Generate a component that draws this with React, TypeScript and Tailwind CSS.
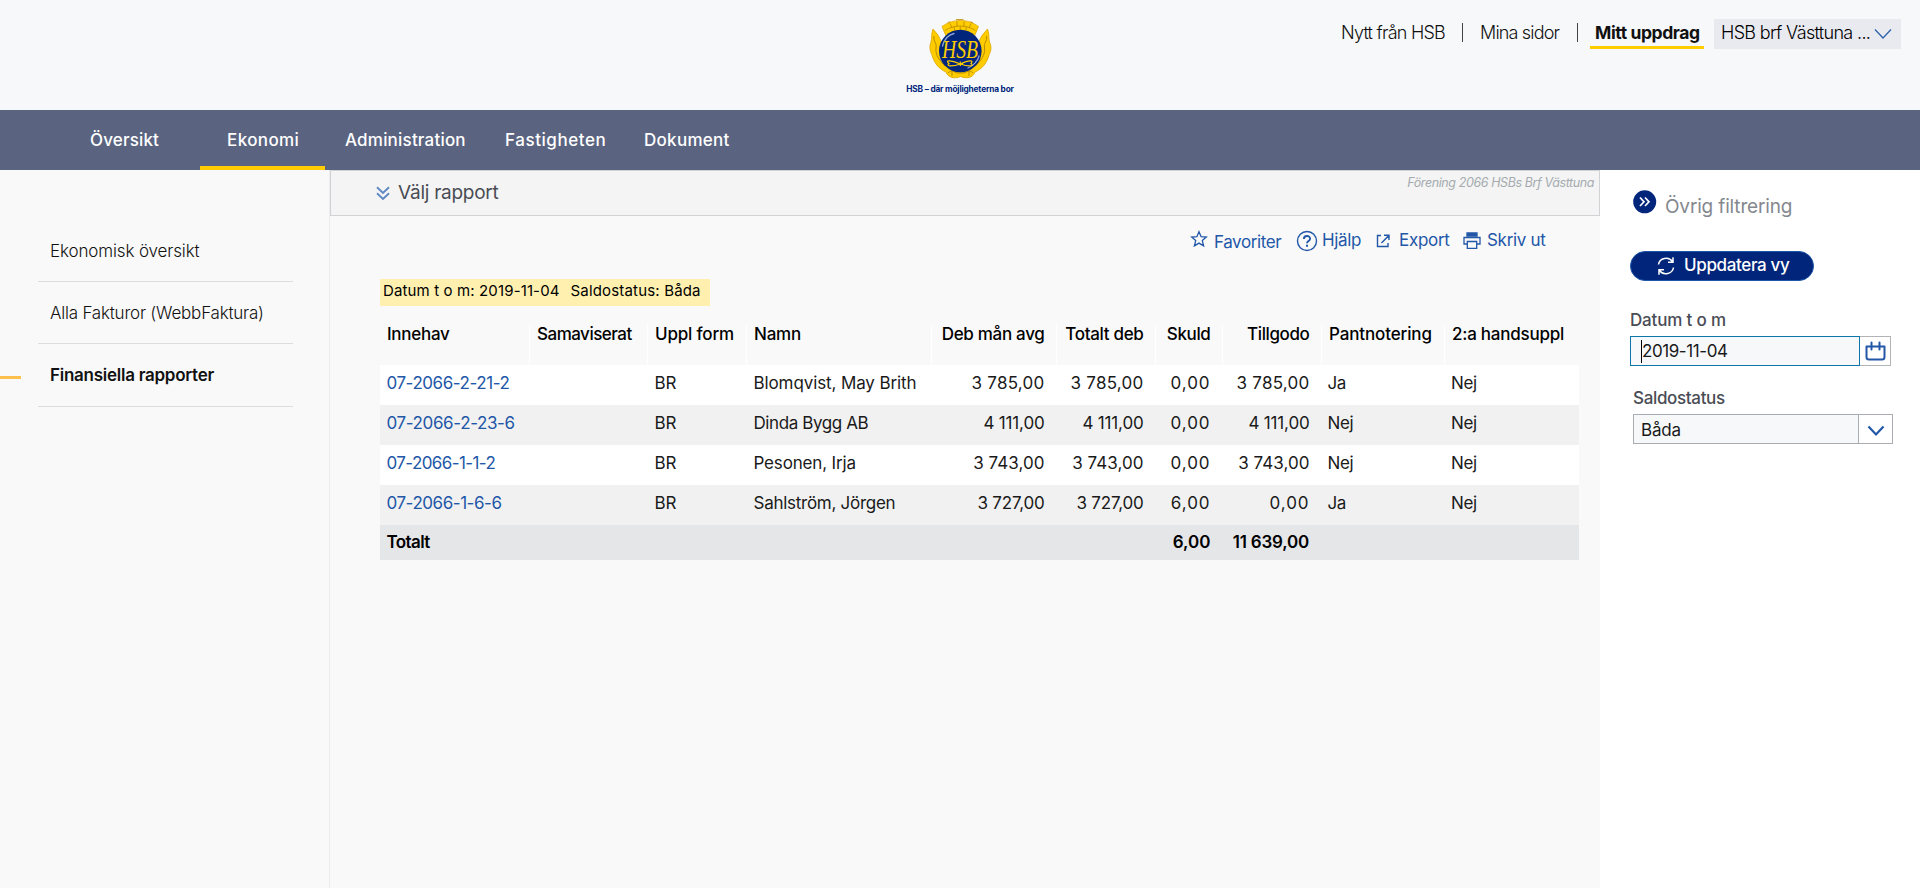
import type { ReactNode } from 'react';

function Logo() {
  return (
    <div className="flex w-[120px] flex-col items-center pt-[18px]">
      <svg width="64" height="62" viewBox="0 0 64 62" fill="none">
        <path d="M14 8.500C25 0.500 40 0.500 50.500 8.500L46.500 18C38 12.500 26.500 12.500 18 18Z" fill="#fc0" stroke="#e0aa00" strokeWidth=".8" />
        <path d="M19.500 5L22 3.500M28 1.500h7.500M42.500 3.500L45 5M17 12.500C26 6.500 38.500 6.500 47.500 12.500M22 5.500l2 4.500M29 3.500v5M36 3.500v5M43 5.500l-2 4.500M26 9l1 5M32.300 8.500v5M38.500 9l-1 5" stroke="#b98b00" strokeWidth=".8" />
        <path d="M5 11C3 17 4 20 3 24C1 29 2 33 4 37C6 45 11 51 18 54C20 60 27 61 32.500 58.500C38 61 45 60 47 54C54 51 59 45 61 37C63 33 64 29 61.500 24C60.500 20 61.500 17 59.500 11L54 17.500L50 25L52 42L42 52H23L12 42L14 25L10 17Z" fill="#fc0" stroke="#dca700" strokeWidth=".8" />
        <path d="M6 18C5 24 9 24 8 30C7 37 12 43 17 48M58.500 18C59.500 24 55.500 24 56.500 30C57.500 37 52.500 43 47.500 48M20 55C24 51 26 54 29 55H36C39 54 41 51 45 55M24 53v5M41 53v5" stroke="#b98b00" strokeWidth="1" />
        <circle cx="32.300" cy="33" r="21.300" fill="#00257a" />
        <path d="M14.500 28C16 22 20 17 26 15.500M40 50C45 48 50 43 51 38" stroke="#8fa3d4" strokeWidth="1.300" strokeLinecap="round" />
        <text x="14" y="39.500" fontSize="25" fontStyle="italic" textLength="36" lengthAdjust="spacingAndGlyphs" fill="#fc0" fontFamily="Liberation Serif, serif">HSB</text>
        <path d="M21 45.500C17 42.500 21 41.500 32.300 46C43 49.500 46 47.500 43 45.500C46 42.500 42 41.500 32.300 46C22 49.500 18 47.500 21 45.500ZM32.300 43.500v4.500M30 45.700h5" stroke="#fc0" strokeWidth="1.200" />
      </svg>
      <span className="mt-[2px] whitespace-nowrap text-[8.3px] leading-[14px] font-bold tracking-[-0.18px] text-[#00257a]">HSB – där möjligheterna bor</span>
    </div>
  );
}

function Header() {
  return (
    <header className="grid h-[110px] grid-cols-[1fr_auto_1fr] bg-[#f7f8fa]">
      <div />
      <Logo />
      <div className="flex justify-end pt-[19px] pr-[19px] text-[18px] leading-[28px] font-light whitespace-nowrap text-[#111]">
        <span className="w-[121px] tracking-[-0.77px]">Nytt från HSB</span>
        <span className="mt-[4px] h-[19px] w-px bg-[#444]" />
        <span className="w-[114px] pl-[17px] tracking-[-0.83px]">Mina sidor</span>
        <span className="mt-[4px] h-[19px] w-px bg-[#444]" />
        <span className="ml-[12px] h-[30px] w-[114px] border-b-[3px] border-[#fc0] pl-[5px] text-[17.5px] leading-[27px] font-bold tracking-[-0.4px]">Mitt uppdrag</span>
        <div className="ml-[10px] flex h-[30px] w-[187px] items-start bg-[#e9eaf0] pl-[7px] text-black">
          <span className="w-[153px] tracking-[-0.67px]">HSB brf Västtuna ...</span>
          <svg className="mt-[9px]" width="18" height="12" viewBox="0 0 18 12" fill="none" stroke="#2f62ad" strokeWidth="1.3">
            <path d="M1 1.500L9 10L17 1.500" />
          </svg>
        </div>
      </div>
    </header>
  );
}

function MainNav() {
  return (
    <nav className="flex h-[60px] bg-[#5a6480] pl-[90px] text-[17px] leading-[60px] font-medium whitespace-nowrap text-white">
      <span className="w-[110px] tracking-[0.15px]">Översikt</span>
      <span className="w-[125px] border-b-4 border-[#fc0] pl-[27px] tracking-[0.38px]">Ekonomi</span>
      <span className="w-[180px] pl-[20px] tracking-[0.2px]">Administration</span>
      <span className="w-[139px] tracking-[0.56px]">Fastigheten</span>
      <span className="tracking-[0.29px]">Dokument</span>
    </nav>
  );
}

function Sidebar() {
  return (
    <aside className="flex w-[330px] shrink-0 flex-col border-r border-[#ececee] pt-[49px] text-[17px] font-light whitespace-nowrap text-[#111]">
      <div className="mr-[36px] ml-[38px] flex h-[63px] items-center border-b border-[#dcdddd] pt-[3px] pl-[12px] tracking-[-0.13px]">Ekonomisk översikt</div>
      <div className="mr-[36px] ml-[38px] flex h-[62px] items-center border-b border-[#dcdddd] pt-[2px] pl-[12px] tracking-[-0.21px]">Alla Fakturor (WebbFaktura)</div>
      <div className="flex h-[63px] items-center">
        <span className="mt-[4px] mr-[17px] h-[3px] w-[21px] bg-[#ffc04d]" />
        <span className="flex h-full w-[255px] items-center border-b border-[#dcdddd] pt-[2px] pl-[12px] font-semibold tracking-[-0.26px]">Finansiella rapporter</span>
      </div>
    </aside>
  );
}

function Toolbar() {
  return (
    <div className="flex h-[50px] items-start pt-[10px] pl-[860px] text-[17px] leading-[28px] whitespace-nowrap text-[#2257a8]">
      <svg className="mt-[4px]" width="18" height="18" viewBox="0 0 18 18" fill="none" stroke="currentColor" strokeWidth="1.300" strokeLinejoin="miter">
        <path d="M9 1.700L11.100 6.700L16.300 7.100L12.300 10.600L13.600 15.900L9 13.100L4.400 15.900L5.700 10.600L1.700 7.100L6.900 6.700Z" />
      </svg>
      <span className="mt-[2px] ml-[6px] w-[82px] tracking-[-0.4px]">Favoriter</span>
      <svg className="mt-[4px]" width="22" height="22" viewBox="0 0 22 22" fill="none" stroke="currentColor" strokeWidth="1.400">
        <circle cx="11" cy="11" r="9.500" />
        <path d="M7.900 9C7.900 5 14.100 5 14.100 8.700C14.100 11 11 11 11 13.300" strokeWidth="1.900" />
        <path d="M11 14.700v2" strokeWidth="2" />
      </svg>
      <span className="ml-[4px] w-[54px] tracking-[-0.35px]">Hjälp</span>
      <svg className="mt-[8px]" width="15" height="14" viewBox="0 0 15 14" fill="none" stroke="currentColor" strokeWidth="1.400">
        <path d="M5 1.500H1.500V12.500H12V9M8 1.300H13V6M12.800 1.500L5.500 9" />
      </svg>
      <span className="ml-[8px] w-[64px] tracking-[-0.3px]">Export</span>
      <svg className="mt-[5px]" width="18" height="19" viewBox="0 0 18 19" fill="none" stroke="currentColor" strokeWidth="1.300">
        <path d="M4 2H14V5H4Z" fill="currentColor" />
        <path d="M4 13H1V6.500H17V13H14M4.300 10.500H13.700V17.300H4.300Z" />
      </svg>
      <span className="ml-[6px] tracking-[-0.3px]">Skriv ut</span>
    </div>
  );
}

const columns = [
  { label: 'Innehav', width: 'w-[150px]', track: 'tracking-[-0.28px]', right: false },
  { label: 'Samaviserat', width: 'w-[118px]', track: 'tracking-[-0.5px]', right: false },
  { label: 'Uppl form', width: 'w-[99px]', track: 'tracking-[-0.18px]', right: false },
  { label: 'Namn', width: 'w-[185px]', track: 'tracking-[-0.2px]', right: false },
  { label: 'Deb mån avg', width: 'w-[125px]', track: 'tracking-[-0.31px]', right: true },
  { label: 'Totalt deb', width: 'w-[99px]', track: 'tracking-[-0.32px]', right: true },
  { label: 'Skuld', width: 'w-[67px]', track: 'tracking-[-0.37px]', right: true },
  { label: 'Tillgodo', width: 'w-[99px]', track: 'tracking-[-0.39px]', right: true },
  { label: 'Pantnotering', width: 'w-[123px]', track: 'tracking-[-0.13px]', right: false },
  { label: '2:a handsuppl', width: 'w-[134px]', track: 'tracking-[-0.24px]', right: false },
];

const rows = [
  { id: '07-2066-2-21-2', idTrack: 'tracking-[-0.45px]', name: 'Blomqvist, May Brith', nameTrack: 'tracking-[-0.11px]', deb: '3 785,00', debTrack: 'tracking-[0.25px]', skuld: '0,00', till: '3 785,00', tillTrack: 'tracking-[0.25px]', pant: 'Ja' },
  { id: '07-2066-2-23-6', idTrack: 'tracking-[-0.38px]', name: 'Dinda Bygg AB', nameTrack: 'tracking-[-0.41px]', deb: '4 111,00', debTrack: 'tracking-[-0.17px]', skuld: '0,00', till: '4 111,00', tillTrack: 'tracking-[-0.17px]', pant: 'Nej' },
  { id: '07-2066-1-1-2', idTrack: 'tracking-[-0.6px]', name: 'Pesonen, Irja', nameTrack: 'tracking-[-0.16px]', deb: '3 743,00', debTrack: 'tracking-[0.04px]', skuld: '0,00', till: '3 743,00', tillTrack: 'tracking-[0.04px]', pant: 'Nej' },
  { id: '07-2066-1-6-6', idTrack: 'tracking-[-0.45px]', name: 'Sahlström, Jörgen', nameTrack: 'tracking-[-0.27px]', deb: '3 727,00', debTrack: 'tracking-[-0.21px]', skuld: '6,00', till: '0,00', tillTrack: 'tracking-[0.95px]', pant: 'Ja' },
];

function Num({ children, track }: { children: ReactNode; track: string }) {
  return <td className={'pr-[12.5px] pb-[4px] text-right ' + track}>{children}</td>;
}

function ReportTable() {
  return (
    <table className="mt-[19px] ml-[50px] w-[1199px] table-fixed border-collapse text-[17px] leading-[20px] whitespace-nowrap text-[#1a1a1a]">
      <thead>
        <tr className="h-[40px] text-black">
          {columns.map((c, i) => (
            <th
              key={c.label}
              className={`${c.width} ${c.track} ${c.right ? 'pr-[12.5px] text-right' : 'pl-[7px] text-left'} ${i < 9 ? 'shadow-[inset_-1px_0_0_#fff]' : ''} pb-[22px] leading-[18px] font-medium`}
            >
              {c.label}
            </th>
          ))}
        </tr>
      </thead>
      <tbody>
        {rows.map((r) => (
          <tr key={r.id} className="h-[40px] odd:bg-white even:bg-[#f1f1f1]">
            <td className={'pb-[4px] pl-[6.5px] text-[#2257a8] ' + r.idTrack}>{r.id}</td>
            <td />
            <td className="pb-[4px] pl-[6.5px] tracking-[-0.12px]">BR</td>
            <td className={'pb-[4px] pl-[6.5px] ' + r.nameTrack}>{r.name}</td>
            <Num track={r.debTrack}>{r.deb}</Num>
            <Num track={r.debTrack}>{r.deb}</Num>
            <Num track="tracking-[0.95px]">{r.skuld}</Num>
            <Num track={r.tillTrack}>{r.till}</Num>
            <td className="pb-[4px] pl-[5.5px] tracking-[-0.4px]">{r.pant}</td>
            <td className="pb-[4px] pl-[6px] tracking-[-0.36px]">Nej</td>
          </tr>
        ))}
        <tr className="h-[35px] bg-[#e5e6e8] font-semibold text-black">
          <td className="pb-[2px] pl-[6.5px] tracking-[-0.6px]">Totalt</td>
          <td colSpan={5} />
          <td className="pr-[12.5px] pb-[2px] text-right">6,00</td>
          <td className="pr-[13px] pb-[2px] text-right tracking-[-0.2px]">11 639,00</td>
          <td colSpan={2} />
        </tr>
      </tbody>
    </table>
  );
}

function Report() {
  return (
    <main className="w-[1270px] shrink-0">
      <div className="flex h-[46px] items-start justify-between border border-[#d0d2d6] bg-[#f4f4f4] pr-[5px] pl-[45px] whitespace-nowrap">
        <div className="flex">
          <svg className="mt-[15px]" width="14" height="15" viewBox="0 0 14 15" fill="none" stroke="#5f88c2" strokeWidth="1.900">
            <path d="M1 1.300L7 7L13 1.300M1 7.300L7 13L13 7.300" />
          </svg>
          <span className="ml-[8px] text-[19px] leading-[44px] tracking-[-0.27px] text-[#494c54]">Välj rapport</span>
        </div>
        <span className="text-[12.5px] leading-[23px] tracking-[-0.4px] text-[#a5abb0] italic">Förening 2066 HSBs Brf Västtuna</span>
      </div>
      <Toolbar />
      <div className="mt-[13px] ml-[50px] flex h-[27px] w-[330px] gap-[11px] bg-[#fff0b0] pl-[3px] text-[15px] leading-[24px] whitespace-nowrap text-black">
        <span className="tracking-[0.13px]">Datum t o m: 2019-11-04</span>
        <span className="tracking-[0.17px]">Saldostatus: Båda</span>
      </div>
      <ReportTable />
    </main>
  );
}

function Filters() {
  return (
    <aside className="flex flex-1 flex-col bg-white pl-[30px] text-[17px] whitespace-nowrap">
      <div className="flex h-[61px] items-start pt-[20px] pl-[3px]">
        <svg width="24" height="24" viewBox="0 0 24 24" fill="none">
          <circle cx="11.700" cy="11.800" r="11.500" fill="#00257a" />
          <path d="M7 7.500L11 11.800L7 16M12 7.500L16 11.800L12 16" stroke="#fff" strokeWidth="1.700" />
        </svg>
        <span className="ml-[8px] pt-[3px] text-[19px] leading-[28px] tracking-[-0.16px] text-[#84888e]">Övrig filtrering</span>
      </div>
      <button className="mt-[20px] flex h-[30px] w-[184px] items-center rounded-full border border-[#1f56a8] bg-[#00257a] pl-[26px] font-medium text-white">
        <svg width="18" height="20" viewBox="0 0 18 20" fill="none" stroke="currentColor" strokeWidth="1.500">
          <path d="M1.500 8.500C2.500 2 11.500 0 15.500 5.500M16 1.300V6.300H11M16.500 11.500C15.500 18 6.500 20 2.500 14.500M2 18.700V13.700H7" />
        </svg>
        <span className="ml-[9px] tracking-[-0.35px]">Uppdatera vy</span>
      </button>
      <label className="mt-[29px] h-[26px] leading-[20px] font-medium tracking-[-0.17px] text-[#494c54]">Datum t o m</label>
      <div className="flex h-[30px]">
        <div className="flex w-[230px] items-center border border-[#0d76a8] bg-[#f7f8fa] pl-[10px] text-[#1a1a1a]">
          <span className="h-[23px] w-px bg-black" />
          <span className="pt-px tracking-[-0.42px]">2019-11-04</span>
        </div>
        <div className="flex w-[31px] items-center justify-center border border-l-0 border-[#b1b3b5]">
          <svg width="21" height="20" viewBox="0 0 21 20" fill="none" stroke="#2257a8" strokeWidth="2" strokeLinecap="round">
            <path d="M1.500 5.500H19.500V16C19.500 18 18.500 18.500 17 18.500H4C2.500 18.500 1.500 18 1.500 16ZM6.500 1.500V8.500M14.500 1.500V8.500" strokeLinejoin="round" />
          </svg>
        </div>
      </div>
      <label className="mt-[21px] ml-[3px] h-[27px] leading-[22px] font-medium tracking-[-0.34px] text-[#494c54]">Saldostatus</label>
      <div className="ml-[3px] flex h-[30px] w-[260px] border border-[#a9acb0]">
        <span className="w-[224px] bg-[#f7f8fa] pl-[7px] leading-[30px] tracking-[-0.19px] text-[#1a1a1a]">Båda</span>
        <span className="flex flex-1 items-center justify-center border-l border-[#a9acb0]">
          <svg className="mt-[3px]" width="18" height="12" viewBox="0 0 18 12" fill="none" stroke="#2257a8" strokeWidth="2.200">
            <path d="M1.500 1.500L9 9.500L16.500 1.500" />
          </svg>
        </span>
      </div>
    </aside>
  );
}

export default function App() {
  return (
    <div className="flex h-[888px] w-[1920px] flex-col overflow-hidden bg-[#f9f9f9] font-['Inter','Liberation_Sans',sans-serif]">
      <Header />
      <MainNav />
      <div className="flex flex-1">
        <Sidebar />
        <Report />
        <Filters />
      </div>
    </div>
  );
}
